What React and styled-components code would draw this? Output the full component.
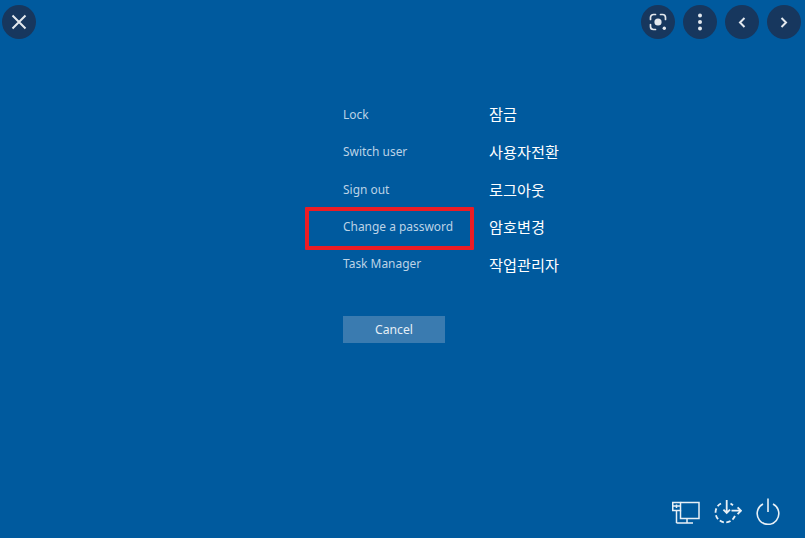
import React from "react";
import styled, { createGlobalStyle } from "styled-components";

const Global = createGlobalStyle`
  html, body { margin: 0; padding: 0; background: #005a9e; }
  #root { width: 805px; height: 538px; overflow: hidden; }
`;

const Screen = styled.div`
  position: relative;
  width: 805px;
  height: 538px;
  background: #005a9e;
  display: flex;
  flex-direction: column;
  box-sizing: border-box;
  font-family: "Noto Sans", "Noto Sans CJK KR", sans-serif;
`;

const TopBar = styled.header`
  display: flex;
  justify-content: space-between;
  padding: 5px 4px 0 2px;
  height: 39px;
  box-sizing: border-box;
  flex: none;
`;

const ButtonGroup = styled.div`
  display: flex;
  gap: 8px;
`;

const RoundButton = styled.button`
  width: 34px;
  height: 34px;
  padding: 0;
  border: 0;
  border-radius: 50%;
  background: #17375e;
  color: #e3e8ee;
  display: flex;
  align-items: center;
  justify-content: center;
`;

const Center = styled.main`
  flex: 1;
  display: flex;
  padding: 62px 0 0 343px;
`;

const Labels = styled.div`
  width: 146px;
  padding-top: 2px;
  display: flex;
  flex-direction: column;
  align-items: flex-start;
`;

const Label = styled.div`
  height: 37.3px;
  line-height: 24px;
  font-size: 11.95px;
  color: #bcd3e6;
  white-space: nowrap;
`;

const Translations = styled.div`
  display: flex;
  flex-direction: column;
`;

const Translation = styled.div`
  height: 37.8px;
  line-height: 24px;
  font-size: 15.2px;
  color: #ffffff;
  font-family: "Noto Sans CJK KR", sans-serif;
  white-space: nowrap;
`;

const CancelButton = styled.button`
  margin-top: 27px;
  width: 102px;
  height: 27px;
  padding: 0;
  border: 0;
  background: #3a7bb0;
  color: #e6eff6;
  font-family: inherit;
  font-size: 12.2px;
`;

const Highlight = styled.div`
  position: absolute;
  left: 305px;
  top: 207px;
  width: 169px;
  height: 43px;
  box-sizing: border-box;
  border: 4px solid #ed1c24;
  border-radius: 1px;
`;

const BottomBar = styled.footer`
  display: flex;
  justify-content: flex-end;
  align-items: flex-end;
  gap: 14px;
  padding: 0 25px 13px 0;
  color: #e8f0f6;
`;

const Close = () => (
  <svg width="16" height="16" viewBox="0 0 16 16" fill="none" stroke="currentColor" strokeWidth="2">
    <path d="M1.5 1.5 14.5 14.5M14.5 1.5 1.5 14.5" />
  </svg>
);
const Scan = () => (
  <svg width="18" height="18" viewBox="0 0 18 18" fill="none" stroke="currentColor" strokeWidth="1.7" strokeLinecap="round">
    <path d="M1.5 6.5V4.5a3 3 0 0 1 3-3h2M11.5 1.5h2a3 3 0 0 1 3 3v2M1.5 11.5v2a3 3 0 0 0 3 3h2" />
    <circle cx="9" cy="9" r="3.6" fill="currentColor" stroke="none" />
    <circle cx="15.3" cy="15.3" r="1.7" fill="currentColor" stroke="none" />
  </svg>
);
const Dots = () => (
  <svg width="6" height="18" viewBox="0 0 6 18" fill="currentColor">
    <circle cx="3" cy="2.5" r="2" />
    <circle cx="3" cy="9" r="2" />
    <circle cx="3" cy="15.5" r="2" />
  </svg>
);
const Chevron = ({ dir }) => (
  <svg width="8" height="11" viewBox="0 0 8 11" fill="none" stroke="currentColor" strokeWidth="2">
    <path d={dir === "left" ? "M6.5 1 2 5.5 6.5 10" : "M1.5 1 6 5.5 1.5 10"} />
  </svg>
);
const Network = () => (
  <svg width="28" height="24" viewBox="0 0 28 24" fill="none" stroke="currentColor" strokeWidth="1.5">
    <path d="M8.5 1.5H27V17.5H8.5V9.5" />
    <path d="M15 17.5V22M4.5 22H21" />
    <rect x="0.75" y="1.5" width="7.75" height="8" />
    <path d="M0.75 5H8.5M4.5 3.5V7M4.5 9.5V22" />
  </svg>
);
const Accessibility = () => (
  <svg width="28" height="26" viewBox="0 0 28 26" fill="none" stroke="currentColor" strokeWidth="1.8">
    <path d="M7 4.5A10 10 0 1 0 21.4 15" strokeDasharray="4.4 2.4" />
    <path d="M12.7 1V14M9.4 10.6 12.7 14 16 10.6" />
    <path d="M17.5 11.7H27M23.6 8.3 27 11.7 23.6 15.1" />
    <path d="M16.5 4.6 19 6.3" />
  </svg>
);
const Power = () => (
  <svg width="24" height="27" viewBox="0 0 24 27" fill="none" stroke="currentColor" strokeWidth="1.6">
    <path d="M12 0.5V14" />
    <path d="M7 6A10.8 10.8 0 1 0 17 6" />
  </svg>
);

const items = [
  ["Lock", "잠금"],
  ["Switch user", "사용자전환"],
  ["Sign out", "로그아웃"],
  ["Change a password", "암호변경"],
  ["Task Manager", "작업관리자"],
];

export default function App() {
  return (
    <Screen>
      <Global />
      <TopBar>
        <RoundButton aria-label="Close"><Close /></RoundButton>
        <ButtonGroup>
          <RoundButton aria-label="Capture"><Scan /></RoundButton>
          <RoundButton aria-label="More"><Dots /></RoundButton>
          <RoundButton aria-label="Previous"><Chevron dir="left" /></RoundButton>
          <RoundButton aria-label="Next"><Chevron dir="right" /></RoundButton>
        </ButtonGroup>
      </TopBar>
      <Center>
        <Labels>
          {items.map(([en]) => <Label key={en}>{en}</Label>)}
          <CancelButton>Cancel</CancelButton>
        </Labels>
        <Translations>
          {items.map(([en, ko]) => <Translation key={en}>{ko}</Translation>)}
        </Translations>
      </Center>
      <Highlight />
      <BottomBar>
        <Network />
        <Accessibility />
        <Power />
      </BottomBar>
    </Screen>
  );
}
